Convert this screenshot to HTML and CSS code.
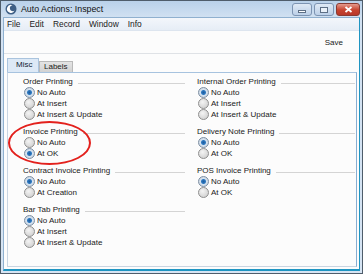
FILE: index.html
```html
<!DOCTYPE html>
<html lang="en">

<head>
    <meta charset="UTF-8">
    <title>Auto Actions: Inspect</title>
    <link rel="stylesheet" href="styles.css">
</head>

<body>
    <div class="window">
        <div class="titlebar">
            <svg class="appicon" width="12" height="12" viewBox="0 0 12 12">
                <circle cx="6" cy="6" r="5.5" fill="#3e5f86" />
                <path d="M7.5 2.2 A4 4 0 1 0 9.6 7.6 A3 3 0 1 1 7.5 2.2 Z" fill="#fff" />
            </svg>
            <span class="title">Auto Actions: Inspect</span>
            <div class="controls">
                <span class="btn min"><i></i></span>
                <span class="btn max"><i></i></span>
                <span class="btn close">
                    <svg width="9" height="7" viewBox="0 0 9 7">
                        <path d="M1.5 1 L7.5 6 M7.5 1 L1.5 6" stroke="#fff" stroke-width="1.8" />
                    </svg>
                </span>
            </div>
        </div>

        <div class="client">
            <ul class="menubar">
                <li>File</li>
                <li>Edit</li>
                <li>Record</li>
                <li>Window</li>
                <li>Info</li>
            </ul>

            <div class="toolbar">
                <span>Save</span>
            </div>

            <div class="tabs">
                <span class="tab active">Misc</span>
                <span class="tab">Labels</span>
            </div>

            <div class="panel">
                <div class="group">
                    <div class="head"><span>Order Printing</span></div>
                    <label class="radio on">No Auto</label>
                    <label class="radio">At Insert</label>
                    <label class="radio">At Insert &amp; Update</label>
                </div>
                <div class="group">
                    <div class="head"><span>Internal Order Printing</span></div>
                    <label class="radio on">No Auto</label>
                    <label class="radio">At Insert</label>
                    <label class="radio">At Insert &amp; Update</label>
                </div>
                <div class="group">
                    <div class="head"><span>Invoice Printing</span></div>
                    <label class="radio">No Auto</label>
                    <label class="radio on">At OK</label>
                </div>
                <div class="group">
                    <div class="head"><span>Delivery Note Printing</span></div>
                    <label class="radio on">No Auto</label>
                    <label class="radio">At OK</label>
                </div>
                <div class="group">
                    <div class="head"><span>Contract Invoice Printing</span></div>
                    <label class="radio on">No Auto</label>
                    <label class="radio">At Creation</label>
                </div>
                <div class="group">
                    <div class="head"><span>POS Invoice Printing</span></div>
                    <label class="radio on">No Auto</label>
                    <label class="radio">At OK</label>
                </div>
                <div class="group">
                    <div class="head"><span>Bar Tab Printing</span></div>
                    <label class="radio on">No Auto</label>
                    <label class="radio">At Insert</label>
                    <label class="radio">At Insert &amp; Update</label>
                </div>
            </div>
        </div>

        <!-- red marker drawn over the Invoice Printing group -->
        <div class="mark"></div>
    </div>
</body>

</html>
```

FILE: styles.css
```css
* {
    margin: 0;
    padding: 0;
    box-sizing: border-box;
    list-style: none;
}

body {
    font-family: "Liberation Sans", Arial, sans-serif;
    font-size: 8px;
    color: #1a1a1a;
    background: #fff;
}

.window {
    position: relative;
    width: 363px;
    height: 274px;
    border: 1px solid #4f5d6b;
    background: linear-gradient(#b9d1ea, #d3e2f2 18px, #d6e4f3);
    padding: 0 2px 2px 2px;
    display: flex;
    flex-direction: column;
}

.titlebar {
    height: 16px;
    display: flex;
    align-items: center;
    padding-left: 2px;
}

.appicon {
    margin-right: 4px;
}

.title {
    font-size: 8.8px;
    color: #111;
}

.controls {
    margin-left: auto;
    display: flex;
    gap: 2px;
    align-self: flex-start;
    margin-top: 2px;
}

.btn {
    width: 20px;
    height: 13px;
    border: 1px solid #7d94b2;
    border-radius: 3px;
    background: linear-gradient(#dfe9f5, #bcd0e8);
    display: flex;
    align-items: center;
    justify-content: center;
}

.btn.min i {
    width: 8px;
    height: 3px;
    margin-top: 4px;
    background: #fff;
    border: 1px solid #5d6f86;
}

.btn.max i {
    width: 8px;
    height: 6px;
    border: 1px solid #5d6f86;
    background: #e9f0f8;
}

.btn.close {
    width: 24px;
    border-color: #8a3a31;
    background: linear-gradient(#e59b8d, #c7432f 55%, #b8382a);
}

.client {
    flex: 1;
    background: #fcfcfc;
    border: 1px solid #8fb0cf;
    border-bottom: 2px solid #1f95c2;
    border-right-color: #1f95c2;
    display: flex;
    flex-direction: column;
}

.menubar {
    height: 13px;
    display: flex;
    align-items: center;
    gap: 9px;
    padding-left: 3px;
    font-size: 8.4px;
    background: linear-gradient(#f3f6fb, #e6edf6);
    border-bottom: 1px solid #dde5ef;
}

.toolbar {
    height: 23px;
    display: flex;
    align-items: center;
    justify-content: flex-end;
    padding-right: 16px;
    border-bottom: 1px solid #dfe2e6;
}

.tabs {
    display: flex;
    align-items: flex-end;
    margin-top: 4px;
    padding-left: 3px;
    height: 14px;
}

.tab {
    height: 11px;
    padding: 0 4px;
    background: linear-gradient(#e4e4e4, #d2d2d2);
    border: 1px solid #b9b9b9;
    border-bottom: none;
    line-height: 10px;
}

.tab.active {
    height: 14px;
    width: 32px;
    padding: 0 0 0 8px;
    line-height: 12px;
    background: #dde9f6;
    border-color: #aac4de;
    color: #123;
}

.panel {
    flex: 1;
    margin: 0 2px 2px 3px;
    border: 1px solid #c9d5e2;
    border-top-color: #a7c3df;
    border-right-color: #86aed3;
    padding: 3px 0 0 15px;
    display: grid;
    grid-template-columns: 162px 158px;
    column-gap: 12px;
    align-content: start;
}

.group {
    margin-bottom: 6px;
}

.head {
    height: 11px;
    display: flex;
    align-items: center;
}

.head::after {
    content: '';
    flex: 1;
    margin: 3px 0 0 5px;
    border-top: 1px solid #d4d4d4;
}

.radio {
    height: 11px;
    display: flex;
    align-items: center;
    padding-left: 1px;
}

.radio::before {
    content: '';
    width: 9px;
    height: 9px;
    margin-right: 2px;
    border-radius: 50%;
    border: 1px solid #8e8e8e;
    background: radial-gradient(circle at 40% 35%, #f4f4f4, #c9c9c9);
}

.radio.on::before {
    border-color: #7c8ea2;
    background: radial-gradient(circle, #1d5c9e 0, #2f79c0 2px, #d6e3f0 3px, #c6cdd6);
}

.mark {
    position: absolute;
    left: 7px;
    top: 120px;
    width: 83px;
    height: 44px;
    border: 2px solid #e3211d;
    border-radius: 50%;
}
```
